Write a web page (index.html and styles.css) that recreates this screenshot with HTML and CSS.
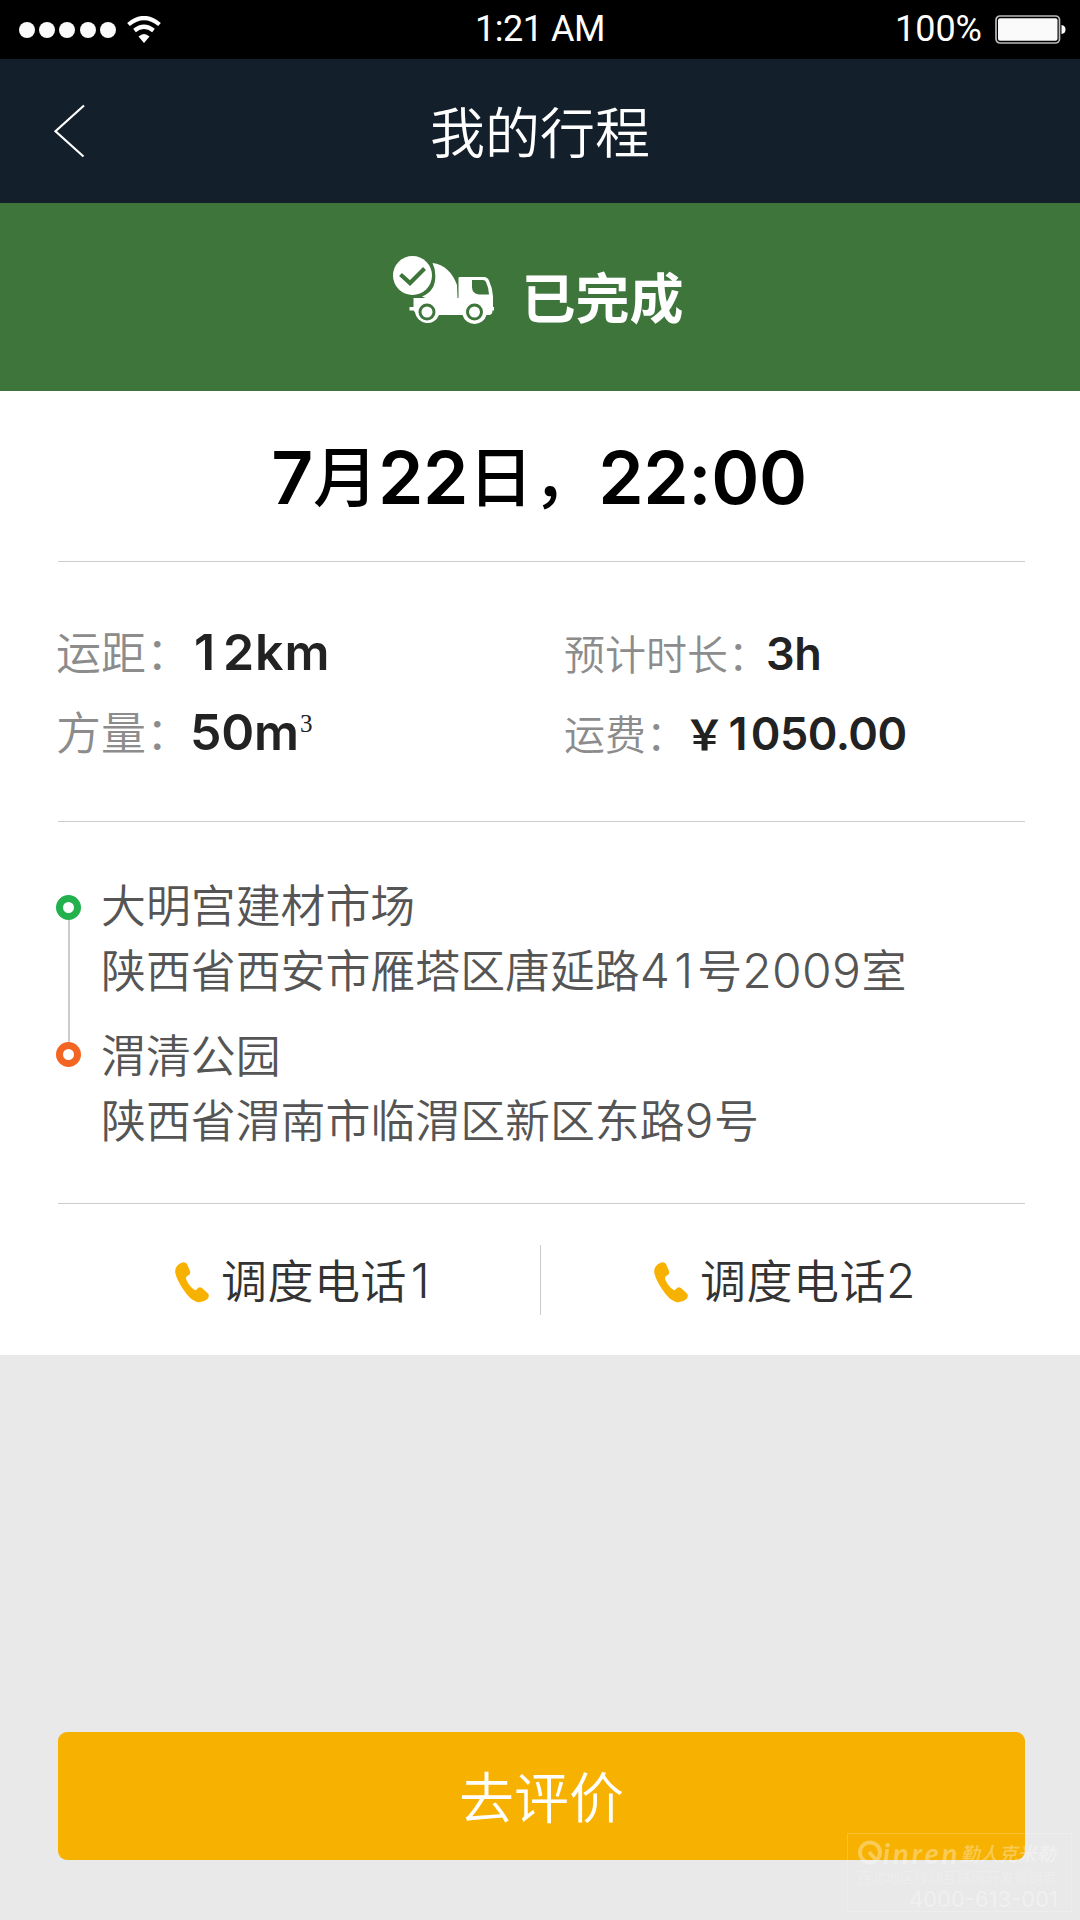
FILE: index.html
```html
<!DOCTYPE html>
<html lang="zh-CN">
<head>
<meta charset="utf-8">
<title>我的行程</title>
<link rel="stylesheet" href="styles.css">
</head>
<body>
<div class="status">
  <div class="signal">
    <i class="bar"></i><i class="bar"></i><i class="bar"></i><i class="bar"></i><i class="bar"></i>
    <svg class="wifi" width="34" height="27" viewBox="0 0 34 27"><g fill="none" stroke="#fff" stroke-width="4.2"><path d="M1.5 8.5Q17-4.5 32.500 8.500"/><path d="M7.500 14.500Q17 7 26.500 14.500"/></g><path fill="#fff" d="M11.500 20.500Q17 15.500 22.500 20.500L17 27Z"/></svg>
  </div>
  <div class="clock">1:21 AM</div>
  <div class="power"><span>100%</span>
    <svg width="72" height="29" viewBox="0 0 72 29"><rect x="1" y="1" width="63.500" height="27" rx="4" fill="#000" stroke="#bbb" stroke-width="1.700"/><rect x="3" y="3.300" width="59.500" height="22.400" rx="2" fill="#fafafa"/><path fill="#fff" d="M66.500 10Q70.500 10.500 70.500 14.500T66.500 19Z"/></svg>
  </div>
</div>
<header class="nav">
  <svg class="back" width="34" height="54" viewBox="0 0 34 54"><path d="M31 1.500L2.500 27.300 30.500 52.500" fill="none" stroke="#fff" stroke-width="2.200"/></svg>
  <h1>我的行程</h1>
</header>
<section class="state">
  <svg class="truck" width="102" height="70" viewBox="0 0 102 70">
    <g fill="#fff">
      <circle cx="19.500" cy="19.500" r="19.500"/>
      <path d="M39.500 7C51 8 60 17 64 29L64.500 42H65.500V22Q65.500 21 66.500 21H91Q94.500 21 96 24.500Q99.500 32 100 40V51H101V54.500H99.500Q99.500 58.500 96.500 59H93.500A12.500 12.500 0 0 1 69.500 59H46A12.500 12.500 0 0 1 22 56.500Q20.500 54 20.500 54.500H16.500V51H20.500V42H32.500L29 40.500Q43 35 42.300 19Q42 12 39.500 7Z"/>
    </g>
    <g fill="none" stroke="#3d753b">
      <path d="M7.500 18.500L17 27 31.500 12.500" stroke-width="4.200"/>
      <circle cx="34" cy="56" r="7" stroke-width="3"/><circle cx="81.500" cy="56" r="7" stroke-width="3"/>
    </g>
    <path fill="#3d753b" d="M79 24H90Q92 24 93 26Q95.500 31 96 38.500H86Q79 38 79 31Z"/>
  </svg>
  <span>已完成</span>
</section>
<main class="trip">
  <h2 class="date"><b>7</b>月<b>22</b>日，<b>22:00</b></h2>
  <div class="facts">
    <p class="fact big"><span class="key">运距：</span><b class="distance"><u>1</u>2km</b></p>
    <p class="fact"><span class="key">预计时长：</span><b>3h</b></p>
    <p class="fact big"><span class="key">方量：</span><b>50m</b><sup>3</sup></p>
    <p class="fact"><span class="key">运费：</span><span class="yen">￥</span><b><u>1</u>050.00</b></p>
  </div>
  <div class="route">
    <div class="stop">
      <div class="rail"><i class="dot from"></i><i class="line"></i></div>
      <div class="place"><p>大明宫建材市场</p><p>陕西省西安市雁塔区唐延路<b>4<u>1</u></b>号<b>2009</b>室</p></div>
    </div>
    <div class="stop">
      <div class="rail end"><i class="dot to"></i></div>
      <div class="place"><p>渭清公园</p><p>陕西省渭南市临渭区新区东路<b>9</b>号</p></div>
    </div>
  </div>
  <div class="calls">
    <a class="call first"><svg width="34" height="41" viewBox="0 0 34 41"><path fill="#f7b100" d="M6 1Q10-1 12 2L15 9Q16 12 13 13.500Q10 14.500 11.500 18Q14 24 19 27.500Q21 29 22 27Q24 24 27 26L33 31.500Q35 34 32.500 37Q28 41 22 40Q15 38 8 27Q2 18 .3 11Q-.5 4 6 1Z"/></svg><span>调度电话<b><u>1</u></b></span></a>
    <i class="split"></i>
    <a class="call"><svg width="34" height="41" viewBox="0 0 34 41"><path fill="#f7b100" d="M6 1Q10-1 12 2L15 9Q16 12 13 13.500Q10 14.500 11.500 18Q14 24 19 27.500Q21 29 22 27Q24 24 27 26L33 31.500Q35 34 32.500 37Q28 41 22 40Q15 38 8 27Q2 18 .3 11Q-.5 4 6 1Z"/></svg><span>调度电话<b>2</b></span></a>
  </div>
</main>
<footer class="foot"><button class="rate">去评价</button></footer>
<div class="mark">
  <p class="brand"><svg width="26" height="26" viewBox="0 0 26 26"><g fill="none" stroke="#fff" stroke-width="4"><circle cx="13" cy="12.500" r="10"/><path d="M12 12L20 21"/></g></svg><em>inren</em><strong>勤人克米勒</strong></p>
  <p class="slogan">西北地区移动互联网开发领跑者</p>
  <p class="tel">4000-613-001</p>
</div>
</body>
</html>
```
FILE: styles.css
```css
* { box-sizing: border-box; margin: 0; padding: 0; }
body {
  width: 1080px; height: 1920px; position: relative; overflow: hidden;
  display: flex; flex-direction: column;
  background: #e9e9e9;
  font-family: "Noto Sans CJK SC", sans-serif; font-weight: 350;
}
i { font-style: normal; }
u { text-decoration: none; padding: 0 .08em; }
svg { display: block; flex: none; }
b { font-family: Inter, sans-serif; }

.status {
  height: 59px; flex: none; background: #000; color: #fff;
  display: grid; grid-template-columns: 1fr auto 1fr; align-items: center;
  font: 400 36px/57px Roboto, sans-serif;
}
.signal { display: flex; align-items: center; gap: 4.2px; padding-left: 19px; }
.bar { width: 16px; height: 16px; border-radius: 50%; background: #fafafa; }
.wifi { margin-left: 7px; }
.clock { letter-spacing: -.5px; }
.power { display: flex; justify-content: flex-end; align-items: center; gap: 13px; padding-right: 13px; }

.nav { height: 144px; flex: none; background: #141f2c; display: grid; grid-template-columns: 120px 1fr 120px; align-items: center; }
.back { margin-left: 53px; }
.nav h1 { color: #fff; font-size: 55px; font-weight: 350; line-height: 80px; text-align: center; padding-bottom: 4px; }

.state {
  height: 188px; flex: none; background: #3d753b; color: #fff;
  display: flex; justify-content: center; align-items: center; gap: 27px;
  padding: 0 4px 3px 0;
  font-size: 54px; font-weight: 700; line-height: 80px;
}
.truck { margin-bottom: 10px; }

.trip { height: 964px; flex: none; background: #fff; padding: 0 55px 0 58px; display: flex; flex-direction: column; }
.date {
  height: 171px; border-bottom: 1px solid #ccc; color: #000;
  text-align: center; white-space: nowrap; padding-right: 5px;
  font-size: 65px; font-weight: 500; line-height: 165px;
}
.date b { font-size: 73px; font-weight: 600; line-height: 1; vertical-align: -3px; letter-spacing: -.4px; }

.facts {
  height: 260px; border-bottom: 1px solid #ccc; padding-top: 49px;
  display: grid; grid-template-columns: 506px 1fr; grid-auto-rows: 80px;
}
.fact { white-space: nowrap; font-size: 41px; line-height: 83px; color: #222; }
.key { color: #8c8c8c; margin-right: -3px; }
.fact b { font-size: 45px; font-weight: 600; line-height: 1; letter-spacing: -.5px; }
.big { font-size: 45px; line-height: 80px; margin-left: -2px; }
.big .key { margin-right: -1px; }
.big b { font-size: 50px; letter-spacing: -.2px; }
.big .distance { letter-spacing: .9px; }
.distance u { padding-right: .14em; }
.fact sup { font: 400 25px/1 "Liberation Serif", serif; vertical-align: 18px; margin-left: 1px; }
.yen { font-weight: 600; }

.route { height: 382px; border-bottom: 1px solid #ccc; padding-top: 49px; color: #555; }
.stop { display: flex; height: 150px; }
.rail { width: 45px; margin-left: -2px; padding: 24px 20px 0 0; flex: none; display: flex; flex-direction: column; align-items: center; }
.end { padding-top: 21px; }
.dot { width: 25px; height: 25px; border-radius: 50%; border: 7px solid #22b14c; flex: none; }
.to { border-color: #f26522; }
.line { width: 2px; height: 122px; flex: none; background: #ccc; }
.place { font-size: 44.9px; line-height: 65px; white-space: nowrap; }
.place b { font-size: 48px; font-weight: 300; line-height: 1; letter-spacing: .4px; }

.calls { flex: 1; display: grid; grid-template-columns: 482px 1px 1fr; align-items: center; color: #333; }
.call { display: flex; align-items: center; gap: 12px; padding-left: 113px; font-size: 46px; line-height: 60px; white-space: nowrap; letter-spacing: .5px; }
.call.first { padding-left: 117px; }
.call svg { margin-top: 5px; }
.call span { padding-bottom: 4px; }
.call b { font-size: 48px; font-weight: 350; line-height: 1; letter-spacing: 0; }
.split { width: 1px; height: 70px; background: #ccc; }

.foot { padding: 377px 55px 0 58px; }
.rate { display: block; width: 967px; height: 128px; border: 0; border-radius: 9px; background: #f7b100; color: #fff; font: 350 55px/124px "Noto Sans CJK SC", sans-serif; padding-bottom: 4px; }

.mark {
  position: absolute; left: 847px; top: 1833px; width: 225px; height: 79px;
  border: 1px solid rgba(255, 255, 255, .6); padding: 6px 13px 0 9px; color: #fff; opacity: .33;
  white-space: nowrap;
}
.brand { display: flex; align-items: center; height: 26px; }
.brand em { font: 700 29px/26px Lato, sans-serif; font-style: italic; letter-spacing: 3px; }
.brand strong { font-size: 19px; font-style: italic; line-height: 26px; font-weight: 500; }
.slogan { font-size: 14.3px; line-height: 22px; opacity: .7; }
.tel { font: 400 22px/22px Inter, sans-serif; text-align: right; }
```
